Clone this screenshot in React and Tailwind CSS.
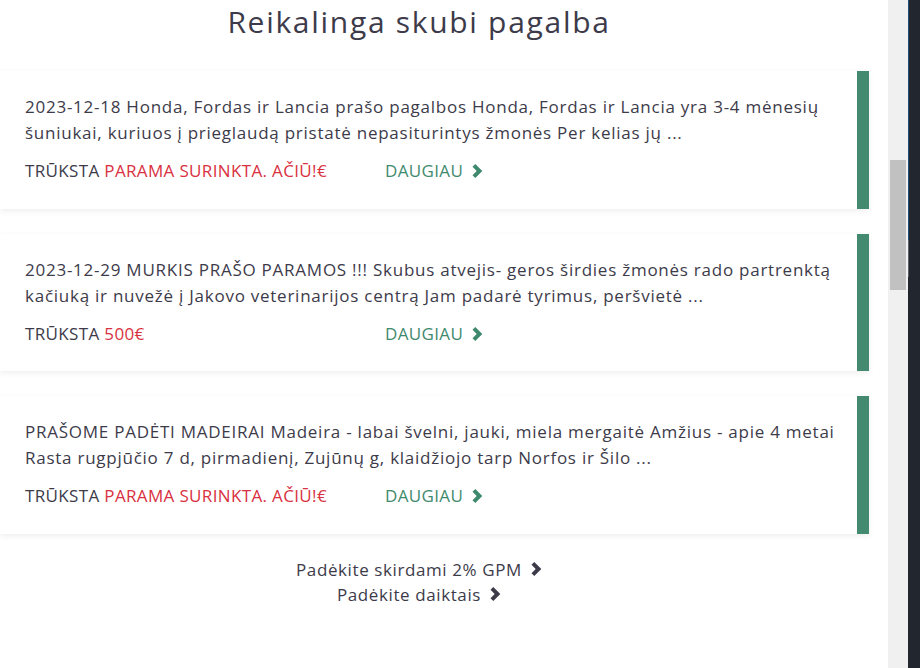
const posts = [
  {
    id: 1,
    text: "2023-12-18 Honda, Fordas ir Lancia prašo pagalbos Honda, Fordas ir Lancia yra 3-4 mėnesių šuniukai, kuriuos į prieglaudą pristatė nepasiturintys žmonės Per kelias jų ...",
    need: "PARAMA SURINKTA. AČIŪ!€",
  },
  {
    id: 2,
    text: "2023-12-29 MURKIS PRAŠO PARAMOS !!! Skubus atvejis- geros širdies žmonės rado partrenktą kačiuką ir nuvežė į Jakovo veterinarijos centrą Jam padarė tyrimus, peršvietė ...",
    need: "500€",
  },
  {
    id: 3,
    text: "PRAŠOME PADĖTI MADEIRAI Madeira - labai švelni, jauki, miela mergaitė Amžius - apie 4 metai Rasta rugpjūčio 7 d, pirmadienį, Zujūnų g, klaidžiojo tarp Norfos ir Šilo ...",
    need: "PARAMA SURINKTA. AČIŪ!€",
  },
];

function Chevron({ className }) {
  return (
    <svg viewBox="0 0 11 14" className={className} fill="currentColor">
      <polygon points="0.5,2.8 3.3,0 10.3,7 3.3,14 0.5,11.2 4.7,7" />
    </svg>
  );
}

function PostCard({ post }) {
  return (
    <div className="flex w-[869px] bg-white shadow-[0_2px_6px_rgba(0,0,0,0.07)]">
      <div className="flex-1 pl-[25px] pr-[22px] pt-[23px] pb-[24.5px]">
        <p className="text-[17px] leading-[26px] tracking-[0.75px] text-[#3d3b4a]">{post.text}</p>
        <div className="mt-[12px] flex items-center text-[17px] leading-[26px] tracking-[0.35px]">
          <div className="w-[360px] text-[#3d3b4a]">
            TRŪKSTA <span className="text-[#d9313f]">{post.need}</span>
          </div>
          <a className="flex items-center gap-[9px] text-[#3f8a6e]">
            DAUGIAU
            <Chevron className="h-[14px] w-[11px]" />
          </a>
        </div>
      </div>
      <div className="w-[12px] bg-[#448a70]" />
    </div>
  );
}

export default function App() {
  return (
    <div className="flex h-[668px] w-[920px] overflow-hidden bg-white font-['Open_Sans','Noto_Sans',sans-serif]">
      <div className="w-[888px]">
        <h2 className="w-[838px] pt-[2px] text-center text-[30px] leading-[40px] tracking-[1.7px] text-[#3d3b4a]">
          Reikalinga skubi pagalba
        </h2>
        <div className="mt-[29px] flex flex-col gap-[25px]">
          {posts.map((post) => (
            <PostCard key={post.id} post={post} />
          ))}
        </div>
        <div className="mt-[23px] flex w-[838px] flex-col items-center text-[17px] leading-[25px] tracking-[0.6px] text-[#3d3b4a]">
          <a className="flex items-center gap-[9px]">
            Padėkite skirdami 2% GPM
            <Chevron className="h-[14px] w-[11px]" />
          </a>
          <a className="flex items-center gap-[9px]">
            Padėkite daiktais
            <Chevron className="h-[14px] w-[11px]" />
          </a>
        </div>
      </div>
      <div className="flex w-[20px] flex-col bg-[#f0f0f0] px-[2px]">
        <div className="mt-[160px] h-[130px] w-full bg-[#c1c1c1]" />
      </div>
      <div className="flex w-[12px] bg-[#22262e]">
        <div className="flex w-px flex-col">
          <div className="h-[240px] bg-[#1f4f78]" />
          <div className="h-[37px] bg-[#5a5d63]" />
        </div>
      </div>
    </div>
  );
}
